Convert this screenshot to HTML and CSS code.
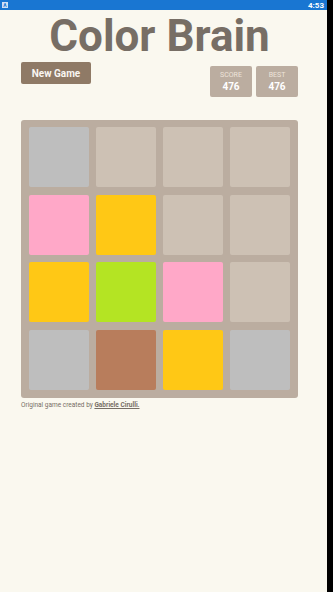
FILE: index.html
```html
<!DOCTYPE html>
<html>

<head>
    <title>Color Brain</title>
    <link rel="stylesheet" href="styles.css">
</head>

<body>
    <div class="screen">
        <div class="status-bar">
            <span class="status-icon">A</span>
            <span class="status-time">4:53</span>
        </div>

        <div class="container">
            <h1 class="title">Color Brain</h1>

            <div class="heading">
                <button class="new-game">New Game</button>
                <div class="scores">
                    <div class="score-box">
                        <div class="score-label">SCORE</div>
                        <div class="score-value">476</div>
                    </div>
                    <div class="score-box">
                        <div class="score-label">BEST</div>
                        <div class="score-value">476</div>
                    </div>
                </div>
            </div>

            <div class="board">
                <div class="cell tile-gray"></div>
                <div class="cell"></div>
                <div class="cell"></div>
                <div class="cell"></div>

                <div class="cell tile-pink"></div>
                <div class="cell tile-yellow"></div>
                <div class="cell"></div>
                <div class="cell"></div>

                <div class="cell tile-yellow"></div>
                <div class="cell tile-green"></div>
                <div class="cell tile-pink"></div>
                <div class="cell"></div>

                <div class="cell tile-gray"></div>
                <div class="cell tile-brown"></div>
                <div class="cell tile-yellow"></div>
                <div class="cell tile-gray"></div>
            </div>

            <p class="credit">Original game created by <a href="#">Gabriele Cirulli.</a></p>
        </div>
    </div>
    <div class="edge"></div>
</body>

</html>
```

FILE: styles.css
```css
html,
body {
    height: 100%;
}

body {
    display: flex;
    margin: 0;
    padding: 0;
    background-color: #000;
    font-family: Roboto, "Liberation Sans", sans-serif;
}

.screen {
    width: 327px;
    background-color: #faf8ef;
}

.edge {
    flex: 1;
    background-color: #000;
}

.status-bar {
    display: flex;
    justify-content: space-between;
    align-items: center;
    height: 10px;
    padding: 0 3px 0 2px;
    background-color: #1976d2;
    color: #fff;
}

.status-icon {
    width: 6px;
    height: 6px;
    background-color: #cfe0f5;
    color: #1976d2;
    font-size: 5px;
    line-height: 6px;
    text-align: center;
    font-weight: bold;
}

.status-time {
    font-size: 8px;
    font-weight: bold;
}

.container {
    padding: 0 29px 0 21px;
}

.title {
    margin: 3px 0 0;
    font-size: 44px;
    line-height: 47px;
    font-weight: bold;
    color: #776e65;
    text-align: center;
}

.heading {
    display: flex;
    justify-content: space-between;
    align-items: flex-start;
    margin-top: 2px;
}

.new-game {
    width: 70px;
    height: 22px;
    padding: 0;
    border: none;
    border-radius: 2px;
    background-color: #8f7a66;
    color: #f9f6f2;
    font-family: Roboto, "Liberation Sans", sans-serif;
    font-size: 10px;
    font-weight: bold;
}

.scores {
    display: flex;
    gap: 4px;
    margin-top: 4px;
}

.score-box {
    width: 42px;
    height: 31px;
    padding-top: 5px;
    box-sizing: border-box;
    border-radius: 2px;
    background-color: #bbada0;
    text-align: center;
}

.score-label {
    font-size: 7px;
    line-height: 9px;
    color: #eee4da;
}

.score-value {
    font-size: 10px;
    line-height: 13px;
    font-weight: bold;
    color: #fff;
}

.board {
    display: grid;
    grid-template-columns: repeat(4, 60px);
    grid-auto-rows: 60px;
    gap: 7px;
    row-gap: 7.5px;
    width: 277px;
    box-sizing: border-box;
    margin-top: 23px;
    padding: 7px 8px 8px;
    border-radius: 3px;
    background-color: #bbada0;
}

.cell {
    border-radius: 2px;
    background-color: #cdc1b4;
}

.tile-gray {
    background-color: #bebebe;
}

.tile-pink {
    background-color: #ffa8c8;
}

.tile-yellow {
    background-color: #ffc815;
}

.tile-green {
    background-color: #b4e423;
}

.tile-brown {
    background-color: #b87d5c;
}

.credit {
    margin: 3px 0 0;
    font-size: 6.5px;
    color: #776e65;
}

.credit a {
    color: #776e65;
    font-weight: bold;
}
```
